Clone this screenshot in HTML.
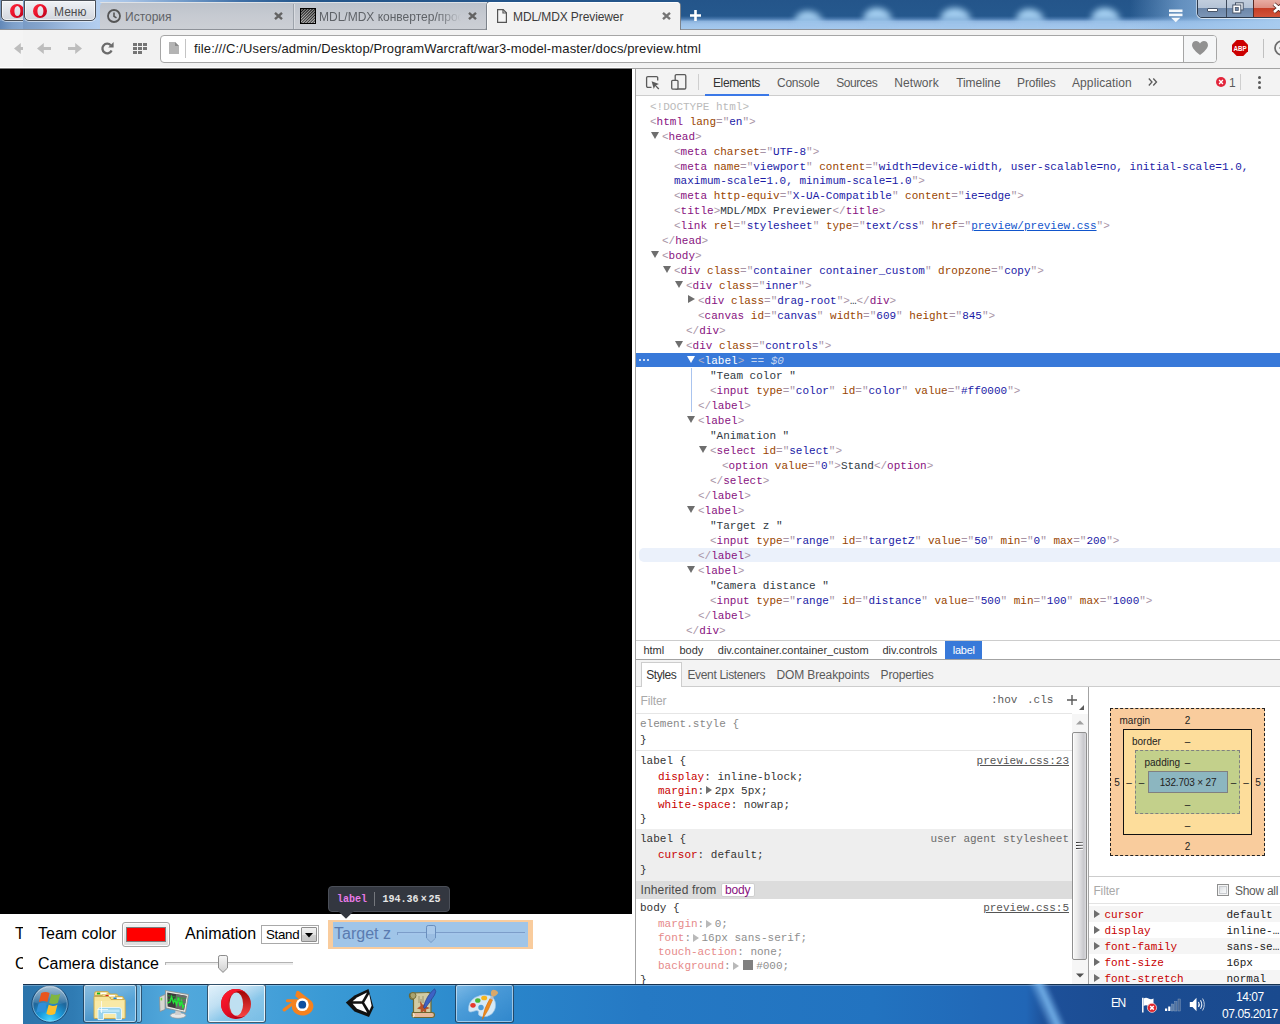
<!DOCTYPE html>
<html lang="ru">
<head>
<meta charset="UTF-8">
<title>MDL/MDX Previewer</title>
<style>
*{box-sizing:border-box;margin:0;padding:0}
html,body{width:1280px;height:1024px;overflow:hidden;background:#fff}
body{position:relative;font-family:"Liberation Sans",sans-serif;font-size:12px;color:#333}
.abs{position:absolute}
.ui{font-family:"Liberation Sans",sans-serif;font-size:12px;white-space:nowrap;position:absolute;line-height:14px}
.mono{font-family:"Liberation Mono",monospace;font-size:11px;white-space:pre;line-height:15px}
svg{position:absolute;overflow:visible}

/* ---------- title bar / sky ---------- */
#sky{left:0;top:0;width:1280px;height:30px;background:linear-gradient(180deg,#24558a 0,#25588d 16px,#4a7aaf 19px,#8db4de 21.500px,#9dc2e9 24px,#a5c9ee 29px);overflow:hidden}
#sky .bump{position:absolute;background:linear-gradient(180deg,#aad6f6 0,#a6d1f3 45%,rgba(160,198,236,.5) 80%,rgba(160,198,236,0) 100%);border-radius:14px 16px 0 0/12px 13px 0 0;filter:blur(3px)}
#skyL{left:0;top:0;width:320px;height:30px;background:linear-gradient(90deg,#6c8fbc 0,#84a4cc 40px,#a4c0e3 72px,#b3ceef 98px,#a5c1e4 130px,#7099c8 185px,#3f6fa6 240px,#27598e 295px,rgba(38,88,141,0) 320px)}
#skyR{left:1130px;top:0;width:150px;height:30px;background:linear-gradient(90deg,rgba(150,190,232,0) 0,rgba(150,190,232,.55) 50px,rgba(168,204,240,.95) 150px)}
#tbline{left:0;top:29px;width:1280px;height:1px;background:#8e9299}
#toolbar{left:0;top:30px;width:1280px;height:38px;background:#f2f2f2}

/* tabs */
.tab{position:absolute;top:2px;height:27px;background:linear-gradient(180deg,#bcc2cb 0,#c6cad1 50%,#cccfd5 100%);border-radius:5px 5px 0 0}
#tab3{background:#f2f2f2;height:28px}

/* ---------- page ---------- */
#canvas{left:0;top:69px;width:632px;height:845px;background:#000}
.pg{position:absolute;font:16px "Liberation Sans",sans-serif;color:#000;white-space:nowrap;line-height:18px}

/* ---------- devtools ---------- */
#dt{left:636px;top:69px;width:644px;height:915px;background:#fff;overflow:hidden}
.row{position:absolute;left:0;height:15px;width:644px}
.row span.t{position:absolute;top:0}
.tg{color:#881280}.br{color:#a894a6}.an{color:#994500}.av{color:#1a1aa6}.tx{color:#303942}
.ar{position:absolute;width:0;height:0}
.ard{border-left:4px solid transparent;border-right:4px solid transparent;border-top:7px solid #6e6e6e}
.arr{border-top:4px solid transparent;border-bottom:4px solid transparent;border-left:7px solid #6e6e6e}
.pn{color:#c80000}
.dim .pn{color:#e68a8a}.dim{color:#8e8e8e}
</style>
</head>
<body>

<!-- ================= TITLE BAR ================= -->
<div id="sky" class="abs">
  <div id="skyL" class="abs"></div>
  <div class="bump" style="left:794px;top:11px;width:29px;height:15px"></div>
  <div class="bump" style="left:863px;top:8px;width:29px;height:18px"></div>
  <div class="bump" style="left:940px;top:8px;width:31px;height:18px"></div>
  <div class="bump" style="left:1016px;top:9px;width:28px;height:17px"></div>
  <div class="bump" style="left:1091px;top:8px;width:29px;height:18px"></div>
  <div id="skyR" class="abs"></div>
</div>
<div id="tbline" class="abs"></div>
<div id="toolbar" class="abs"></div>

<!-- menu button -->
<div class="abs" id="menubtn" style="left:24px;top:0;width:72px;height:21px;border-top-color:#8aa6c8;border:1px solid #4a4f57;border-radius:0 0 5px 5px;background:linear-gradient(180deg,#eef1f5 0,#dfe3e9 55%,#d2d7de 100%);box-shadow:0 1px 0 rgba(255,255,255,.55),inset 0 0 0 1px rgba(255,255,255,.6)"></div>
<svg style="left:33px;top:4px" width="14" height="14" viewBox="0 0 14 14"><defs><linearGradient id="og" x1="0" y1="0" x2="1" y2="1"><stop offset="0" stop-color="#ff2a3c"/><stop offset=".5" stop-color="#e8102a"/><stop offset="1" stop-color="#b00018"/></linearGradient></defs><path fill-rule="evenodd" fill="url(#og)" d="M7 0a7 7 0 1 0 0 14A7 7 0 0 0 7 0zM7.400 1.900c1.800 0 3 2.200 3 5.100s-1.200 5.100-3 5.100-3-2.200-3-5.100 1.200-5.100 3-5.100z"/></svg>
<div class="ui" id="menutxt" style="left:54px;top:5px;color:#4d4d4d">Меню</div>

<!-- tabs -->
<div class="tab" id="tab1" style="left:100px;width:194px;border-radius:5px 0 0 0"></div>
<div class="abs" style="left:483px;top:25px;width:5px;height:4px;background:#f2f2f2"></div>
<div class="tab" id="tab2" style="left:294px;width:193px;border-radius:0 0 4px 0;box-shadow:1px 0 0 #7d838b"></div>
<div class="abs" style="left:293px;top:4px;width:1px;height:25px;background:#9da3ab"></div>
<div class="abs" style="left:294px;top:4px;width:1px;height:25px;background:#d9dce1"></div>
<div class="abs" style="left:100px;top:2px;width:387px;height:1px;background:#dfe2e6;border-radius:5px 0 0 0"></div>
<div class="tab" id="tab3" style="left:487px;width:193px;border-radius:4px 4px 0 0;box-shadow:-1px 0 0 #7d838b,1px 0 0 #7d838b,inset 0 1px 0 #fff,inset 1px 0 0 #fafafa"></div>
<div class="abs" style="left:487px;top:29px;width:193px;height:1px;background:#f2f2f2"></div>

<!-- tab1: clock + История -->
<svg style="left:107px;top:9px" width="14" height="14" viewBox="0 0 14 14"><circle cx="7" cy="7" r="6" fill="none" stroke="#555" stroke-width="1.800"/><path d="M7 3.500V7.300L9.500 8.900" fill="none" stroke="#555" stroke-width="1.600"/></svg>
<div class="ui" id="t1txt" style="left:125px;top:10px;color:#5f6368">История</div>
<svg class="cx" style="left:274px;top:12px" width="9" height="8" viewBox="0 0 9 8"><path d="M1 .8L8 7.200M8 .8L1 7.200" stroke="#636363" stroke-width="2.400"/></svg>

<!-- tab2: hatch + text -->
<svg style="left:300px;top:8px" width="16" height="16" viewBox="0 0 16 16"><defs><pattern id="hat" width="2" height="2" patternUnits="userSpaceOnUse" patternTransform="rotate(-45)"><rect width="2" height="2" fill="#0a0a0a"/><rect width="2" height="1.050" fill="#b4b4b4"/></pattern><linearGradient id="hatg" x1="0" y1="0" x2="0" y2="1"><stop offset="0" stop-color="#000" stop-opacity=".22"/><stop offset="1" stop-color="#fff" stop-opacity=".18"/></linearGradient></defs><rect x="0" y="0" width="16" height="16" fill="#000"/><rect x="1" y="1" width="14" height="14" fill="url(#hat)"/><rect x="1" y="1" width="14" height="14" fill="url(#hatg)"/></svg>
<div class="ui" id="t2txt" style="left:319px;top:10px;color:#5f6368;width:143px;overflow:hidden;-webkit-mask-image:linear-gradient(90deg,#000 118px,transparent 142px)">MDL/MDX конвертер/просмотр</div>
<svg class="cx" style="left:468px;top:12px" width="9" height="8" viewBox="0 0 9 8"><path d="M1 .8L8 7.200M8 .8L1 7.200" stroke="#636363" stroke-width="2.400"/></svg>

<!-- tab3: page icon + MDL/MDX Previewer -->
<svg style="left:497px;top:9px" width="10" height="14" viewBox="0 0 10 14"><path d="M.6.600H6.200L9.400 3.800V13.400H.6z" fill="#f4f4f4" stroke="#555" stroke-width="1.200"/><path d="M6 .600V4H9.400" fill="none" stroke="#555" stroke-width="1.200"/></svg>
<div class="ui" id="t3txt" style="left:513px;top:10px;letter-spacing:-.1px;color:#3b3b3b">MDL/MDX Previewer</div>
<svg class="cx" style="left:662px;top:12px" width="9" height="8" viewBox="0 0 9 8"><path d="M1 .8L8 7.200M8 .8L1 7.200" stroke="#757575" stroke-width="2.400"/></svg>

<!-- new tab plus -->
<svg style="left:690px;top:10px" width="11" height="11" viewBox="0 0 11 11"><path d="M5.500 0V11M0 5.500H11" stroke="#fff" stroke-width="2.600"/></svg>

<!-- tab list icon -->
<svg style="left:1169px;top:9px" width="14" height="14" viewBox="0 0 14 14"><rect x="0" y=".5" width="13.500" height="2.600" fill="#f4f8fc"/><rect x="0" y="4.600" width="13.500" height="2.600" fill="#f4f8fc"/><path d="M2.200 8.800H11.300L6.750 13.300z" fill="#f4f8fc"/></svg>

<!-- window buttons -->
<div class="abs" id="winbtns" style="left:1197px;top:-2px;width:90px;height:20px;border:1px solid #2d3a4c;border-radius:0 0 0 5px;box-shadow:0 1px 0 rgba(255,255,255,.7),-1px 0 0 rgba(255,255,255,.5);overflow:hidden">
  <div class="abs" style="left:0;top:0;width:28px;height:19px;background:linear-gradient(180deg,#c3cfde 0,#b4c3d6 9px,#6c86a8 9px,#7d97b8 19px)"></div>
  <div class="abs" style="left:28px;top:0;width:1px;height:19px;background:#3d4a5c"></div>
  <div class="abs" style="left:29px;top:0;width:26px;height:19px;background:linear-gradient(180deg,#c3cfde 0,#b4c3d6 9px,#6c86a8 9px,#7d97b8 19px)"></div>
  <div class="abs" style="left:55px;top:0;width:1px;height:19px;background:#5a2a24"></div>
  <div class="abs" style="left:56px;top:0;width:34px;height:19px;background:linear-gradient(180deg,#e9b0a6 0,#dd8f82 9px,#c53d25 9px,#d4563c 19px)"></div>
</div>
<div class="abs" style="left:1207px;top:8px;width:11px;height:4px;background:#fff;border:1px solid #485569;border-radius:1px"></div>
<svg style="left:1232px;top:2px" width="12" height="12" viewBox="0 0 12 12"><rect x="3.500" y=".8" width="7.700" height="7.200" fill="#eef2f7" stroke="#485569" stroke-width="1"/><rect x=".8" y="3" width="8" height="8" fill="#fff" stroke="#485569" stroke-width="1"/><rect x="3.300" y="5.500" width="3" height="3" fill="#6f88a8" stroke="#485569" stroke-width=".8"/></svg>
<svg style="left:1273px;top:3px" width="12" height="10" viewBox="0 0 12 10"><path d="M1 1L10 9M10 1L1 9" stroke="#5a2a24" stroke-width="4.200"/><path d="M1 1L10 9M10 1L1 9" stroke="#fff" stroke-width="2.600"/></svg>

<!-- toolbar icons -->
<svg id="bk" style="left:37px;top:43px" width="14" height="11" viewBox="0 0 14 11"><path d="M6.800 0L0 5.500 6.800 11V7H14V4H6.800z" fill="#bdbdbd"/></svg>
<svg id="fw" style="left:68px;top:43px" width="14" height="11" viewBox="0 0 14 11"><path d="M7.200 0L14 5.500 7.200 11V7H0V4H7.200z" fill="#bdbdbd"/></svg>
<svg id="rl" style="left:101px;top:42px" width="13" height="13" viewBox="0 0 13 13"><path d="M10.600 8.500A4.800 4.800 0 1 1 9.800 3.300" fill="none" stroke="#6b6b6b" stroke-width="2.300"/><path d="M7.200 5.400H12.600V0z" fill="#6b6b6b"/></svg>
<svg id="gr" style="left:133px;top:43px" width="14" height="11" viewBox="0 0 14 11" fill="#757575"><rect x="0" y="0" width="4" height="3"/><rect x="5" y="0" width="4" height="3"/><rect x="10" y="0" width="4" height="3"/><rect x="0" y="4" width="4" height="3"/><rect x="5" y="4" width="4" height="3"/><rect x="10" y="4" width="4" height="3"/><rect x="0" y="8" width="4" height="3"/><rect x="5" y="8" width="4" height="3"/></svg>

<!-- address field -->
<div class="abs" id="addr" style="left:160px;top:35px;width:1057px;height:28px;border:1px solid #a6a6a6;border-radius:4px;background:#fff"></div>
<div class="abs" style="left:1183px;top:36px;width:33px;height:26px;background:#f5f6f7;border-left:1px solid #a6a6a6;border-radius:0 3px 3px 0"></div>
<svg style="left:169px;top:42px" width="10" height="12" viewBox="0 0 10 12"><path d="M0 0H6L10 4V12H0z" fill="#b4b4b4"/><path d="M6 0V4H10z" fill="#8a8a8a"/></svg>
<div class="abs" style="left:185px;top:39px;width:1px;height:19px;background:#c4c4c4"></div>
<div class="ui" id="url" style="left:194px;top:41px;font-size:13px;letter-spacing:.128px;color:#1a1a1a;line-height:16px">file:///C:/Users/admin/Desktop/ProgramWarcraft/war3-model-master/docs/preview.html</div>
<svg style="left:1192px;top:41px" width="16" height="14" viewBox="0 0 16 14"><path d="M8 14C8 14 0 8.200 0 4.200 0 1.600 1.900 0 4.100 0 5.800 0 7.200 1 8 2.400 8.800 1 10.200 0 11.900 0 14.100 0 16 1.600 16 4.200 16 8.200 8 14 8 14z" fill="#919191"/></svg>
<!-- ABP -->
<svg style="left:1232px;top:40px" width="16" height="16" viewBox="0 0 16 16"><path d="M4.700 0H11.300L16 4.700V11.300L11.300 16H4.700L0 11.300V4.700z" fill="#cc0000"/><text x="8" y="11.200" text-anchor="middle" font-family="Liberation Sans, sans-serif" font-weight="bold" font-size="7.500" fill="#fff" textLength="13" lengthAdjust="spacingAndGlyphs">ABP</text></svg>
<div class="abs" style="left:1263px;top:39px;width:1px;height:19px;background:#c0c0c0"></div>
<svg style="left:1274px;top:40px" width="16" height="16" viewBox="0 0 16 16"><circle cx="8" cy="8" r="7" fill="none" stroke="#6b6b6b" stroke-width="1.700"/><path d="M5 8H9" stroke="#6b6b6b" stroke-width="1.200"/></svg>




<!-- ================= PAGE ================= -->
<div id="canvas" class="abs"></div>
<div class="abs" style="left:0;top:67px;width:632px;height:1px;background:#fff"></div>
<div class="abs" style="left:0;top:68px;width:632px;height:1px;background:#7a7a7a"></div>
<!-- controls line 1 -->
<div class="pg" id="tc" style="left:38px;top:925px">Team color</div>
<div class="abs" id="colorinp" style="left:122px;top:922px;width:48px;height:25px;border:1px solid #a3a3a3;border-radius:3px;background:linear-gradient(180deg,#f4f4f4,#dcdcdc);box-shadow:inset 0 0 0 1px #fdfdfd"></div>
<div class="abs" style="left:126px;top:927px;width:40px;height:15px;background:#ff0000;border:1px solid #7d7d7d"></div>
<div class="pg" id="an" style="left:185px;top:925px">Animation</div>
<div class="abs" id="sel" style="left:261px;top:925px;width:58px;height:19px;border:1px solid #a9a9a9;background:#fff"></div>
<div class="pg" id="stand" style="left:266px;top:926px;font-size:13.333px;letter-spacing:-.3px;line-height:17px">Stand</div>
<div class="abs" style="left:301px;top:927px;width:16px;height:15px;border:1px solid #8e8e8e;border-radius:1px;background:linear-gradient(180deg,#f2f2f2 0,#e4e4e4 50%,#cfcfcf 51%,#c6c6c6 100%)"></div>
<svg style="left:305px;top:933px" width="8" height="5" viewBox="0 0 8 5"><path d="M0 0H8L4 4.500z" fill="#000"/></svg>
<!-- highlighted label (Target z) -->
<div class="abs" style="left:328px;top:920px;width:205px;height:29px;background:#f9cc9d"></div>
<div class="abs" style="left:333px;top:922px;width:195px;height:25px;background:#a0c5e8"></div>
<div class="pg" id="tz" style="left:334px;top:925px;color:#5a7bb0">Target z</div>
<div class="abs" style="left:397px;top:932px;width:128px;height:3px;background:#a3c6ea;border-top:1px solid #7c9dc9;border-left:1px solid #7c9dc9"></div>
<svg style="left:426px;top:925px" width="10" height="18" viewBox="0 0 10 18"><path d="M2.200 .5H7.800Q9.500 .5 9.500 2.200V13L5 17.400.5 13V2.200Q.5 .5 2.200 .5z" fill="#a9c9ea" stroke="#6a8fbe"/><path d="M1 9H9V13L5 16.800 1 13z" fill="#9abde2"/></svg>
<!-- controls line 2 -->
<div class="pg" id="cd" style="left:38px;top:955px">Camera distance</div>
<div class="abs" style="left:165px;top:962px;width:128px;height:3px;background:#ededed;border-top:1px solid #b3b3b3;border-left:1px solid #b3b3b3"></div>
<svg style="left:218px;top:955px" width="10" height="18" viewBox="0 0 10 18"><defs><linearGradient id="thg" x1="0" y1="0" x2="0" y2="1"><stop offset="0" stop-color="#f6f6f6"/><stop offset=".55" stop-color="#e2e2e2"/><stop offset="1" stop-color="#cfcfcf"/></linearGradient></defs><path d="M2.200 .5H7.800Q9.500 .5 9.500 2.200V13L5 17.400.5 13V2.200Q.5 .5 2.200 .5z" fill="url(#thg)" stroke="#8c8c8c"/></svg>
<!-- tooltip -->
<div class="abs" id="tip" style="left:328px;top:886px;width:122px;height:26px;background:#333740;border:1px solid #4b4f58;border-radius:4px"></div>
<svg style="left:338px;top:911px" width="16" height="8" viewBox="0 0 16 8"><path d="M0 0H16L8 7.800z" fill="#333740"/></svg>
<div class="abs mono" id="tiplabel" style="left:337px;top:894px;font-weight:bold;font-size:10px;line-height:12px;color:#e87ae8">label</div>
<div class="abs" style="left:374px;top:892px;width:1px;height:14px;background:#74777d"></div>
<div class="abs mono" id="tipdim" style="left:382.500px;top:894px;font-weight:bold;font-size:10px;line-height:12px;color:#e6e6e6">194.36<span style="margin:0 1.800px 0 2.200px">×</span>25</div>

<!-- ================= DEVTOOLS ================= -->
<div class="abs" style="left:635px;top:69px;width:1px;height:915px;background:#a3a3a3"></div>
<div class="abs" style="left:632px;top:68px;width:648px;height:1px;background:#a3a3a3"></div>
<div id="dt" class="abs">
<div class="abs" style="left:0;top:0;width:644px;height:26px;background:#f3f3f3"></div>
<div class="abs" style="left:0;top:26px;width:644px;height:1px;background:#cdcdcd"></div>
<svg style="left:10px;top:7px" width="14" height="13" viewBox="0 0 14 13"><path d="M5.500 11.300H1.800A1.200 1.200 0 0 1 .6 10.100V1.800A1.200 1.200 0 0 1 1.800.600H10.500A1.200 1.200 0 0 1 11.700 1.800V4.600" fill="none" stroke="#5a5a5a" stroke-width="1.300"/><path d="M5.600 5.300L13 8 10 9.200 13.300 12.500 12.300 13.400 9.100 10.100 7.800 12.900z" fill="#5a5a5a"/></svg>
<svg style="left:35px;top:5px" width="16" height="16" viewBox="0 0 16 16"><rect x="4.200" y=".7" width="10.600" height="14.300" rx="1.200" fill="none" stroke="#5a5a5a" stroke-width="1.300"/><rect x=".7" y="6.300" width="6.300" height="8.800" rx="1" fill="#f3f3f3" stroke="#5a5a5a" stroke-width="1.300"/></svg>
<div class="abs" style="left:62px;top:5px;width:1px;height:16px;background:#cfcfcf"></div>
<div class="ui dtt" id="dtt0" style="letter-spacing:-0.379px;left:77.0px;top:7px;color:#333">Elements</div>
<div class="ui dtt" id="dtt1" style="letter-spacing:-0.233px;left:141.0px;top:7px;color:#5a5a5a">Console</div>
<div class="ui dtt" id="dtt2" style="letter-spacing:-0.447px;left:200.3px;top:7px;color:#5a5a5a">Sources</div>
<div class="ui dtt" id="dtt3" style="letter-spacing:0.055px;left:258.3px;top:7px;color:#5a5a5a">Network</div>
<div class="ui dtt" id="dtt4" style="letter-spacing:-0.063px;left:320.2px;top:7px;color:#5a5a5a">Timeline</div>
<div class="ui dtt" id="dtt5" style="letter-spacing:-0.189px;left:381.1px;top:7px;color:#5a5a5a">Profiles</div>
<div class="ui dtt" id="dtt6" style="letter-spacing:0.098px;left:436.0px;top:7px;color:#5a5a5a">Application</div>
<div class="abs" style="left:69px;top:25px;width:64px;height:2px;background:#3b78e7"></div>
<svg style="left:512px;top:9px" width="10" height="8" viewBox="0 0 10 8"><path d="M.8.500L4 4 .8 7.500M5.300.500L8.500 4 5.300 7.500" fill="none" stroke="#5a5a5a" stroke-width="1.300"/></svg>
<svg style="left:580px;top:8px" width="10" height="10" viewBox="0 0 10 10"><circle cx="5" cy="5" r="5" fill="#e2263b"/><path d="M3.100 3.100L6.900 6.900M6.900 3.100L3.100 6.900" stroke="#fff" stroke-width="1.400"/></svg>
<div class="ui" style="left:593px;top:7px;color:#5a5a5a">1</div>
<div class="abs" style="left:604px;top:5px;width:1px;height:16px;background:#cfcfcf"></div>
<div class="abs" style="left:622px;top:7px;width:3px;height:3px;border-radius:50%;background:#5a5a5a"></div>
<div class="abs" style="left:622px;top:12px;width:3px;height:3px;border-radius:50%;background:#5a5a5a"></div>
<div class="abs" style="left:622px;top:17px;width:3px;height:3px;border-radius:50%;background:#5a5a5a"></div>
<div class="row mono" id="r0" style="top:31px"><span class="t" style="left:14px"><span style="color:#bababa">&lt;!DOCTYPE html&gt;</span></span></div>
<div class="row mono" id="r1" style="top:46px"><span class="t" style="left:14px"><span class="br">&lt;</span><span class="tg">html</span> <span class="an">lang</span><span class="br">="</span><span class="av">en</span><span class="br">"</span><span class="br">&gt;</span></span></div>
<div class="ar ard" style="left:15px;top:63px"></div>
<div class="row mono" id="r2" style="top:61px"><span class="t" style="left:26px"><span class="br">&lt;</span><span class="tg">head</span><span class="br">&gt;</span></span></div>
<div class="row mono" id="r3" style="top:76px"><span class="t" style="left:38px"><span class="br">&lt;</span><span class="tg">meta</span> <span class="an">charset</span><span class="br">="</span><span class="av">UTF-8</span><span class="br">"</span><span class="br">&gt;</span></span></div>
<div class="row mono" id="r4" style="top:91px"><span class="t" style="left:38px"><span class="br">&lt;</span><span class="tg">meta</span> <span class="an">name</span><span class="br">="</span><span class="av">viewport</span><span class="br">"</span> <span class="an">content</span><span class="br">="</span><span class="av">width=device-width, user-scalable=no, initial-scale=1.0,</span></span></div>
<div class="row mono" id="r5" style="top:105px"><span class="t" style="left:38px"><span class="av">maximum-scale=1.0, minimum-scale=1.0</span><span class="br">"&gt;</span></span></div>
<div class="row mono" id="r6" style="top:120px"><span class="t" style="left:38px"><span class="br">&lt;</span><span class="tg">meta</span> <span class="an">http-equiv</span><span class="br">="</span><span class="av">X-UA-Compatible</span><span class="br">"</span> <span class="an">content</span><span class="br">="</span><span class="av">ie=edge</span><span class="br">"</span><span class="br">&gt;</span></span></div>
<div class="row mono" id="r7" style="top:135px"><span class="t" style="left:38px"><span class="br">&lt;</span><span class="tg">title</span><span class="br">&gt;</span><span class="tx">MDL/MDX Previewer</span><span class="br">&lt;/</span><span class="tg">title</span><span class="br">&gt;</span></span></div>
<div class="row mono" id="r8" style="top:150px"><span class="t" style="left:38px"><span class="br">&lt;</span><span class="tg">link</span> <span class="an">rel</span><span class="br">="</span><span class="av">stylesheet</span><span class="br">"</span> <span class="an">type</span><span class="br">="</span><span class="av">text/css</span><span class="br">"</span> <span class="an">href</span><span class="br">="</span><span style="color:#1155cc;text-decoration:underline">preview/preview.css</span><span class="br">"</span><span class="br">&gt;</span></span></div>
<div class="row mono" id="r9" style="top:165px"><span class="t" style="left:26px"><span class="br">&lt;/</span><span class="tg">head</span><span class="br">&gt;</span></span></div>
<div class="ar ard" style="left:15px;top:182px"></div>
<div class="row mono" id="r10" style="top:180px"><span class="t" style="left:26px"><span class="br">&lt;</span><span class="tg">body</span><span class="br">&gt;</span></span></div>
<div class="ar ard" style="left:27px;top:197px"></div>
<div class="row mono" id="r11" style="top:195px"><span class="t" style="left:38px"><span class="br">&lt;</span><span class="tg">div</span> <span class="an">class</span><span class="br">="</span><span class="av">container container_custom</span><span class="br">"</span> <span class="an">dropzone</span><span class="br">="</span><span class="av">copy</span><span class="br">"</span><span class="br">&gt;</span></span></div>
<div class="ar ard" style="left:39px;top:212px"></div>
<div class="row mono" id="r12" style="top:210px"><span class="t" style="left:50px"><span class="br">&lt;</span><span class="tg">div</span> <span class="an">class</span><span class="br">="</span><span class="av">inner</span><span class="br">"</span><span class="br">&gt;</span></span></div>
<div class="ar arr" style="left:52px;top:226px"></div>
<div class="row mono" id="r13" style="top:225px"><span class="t" style="left:62px"><span class="br">&lt;</span><span class="tg">div</span> <span class="an">class</span><span class="br">="</span><span class="av">drag-root</span><span class="br">"</span><span class="br">&gt;</span><span class="tx">…</span><span class="br">&lt;/</span><span class="tg">div</span><span class="br">&gt;</span></span></div>
<div class="row mono" id="r14" style="top:240px"><span class="t" style="left:62px"><span class="br">&lt;</span><span class="tg">canvas</span> <span class="an">id</span><span class="br">="</span><span class="av">canvas</span><span class="br">"</span> <span class="an">width</span><span class="br">="</span><span class="av">609</span><span class="br">"</span> <span class="an">height</span><span class="br">="</span><span class="av">845</span><span class="br">"</span><span class="br">&gt;</span></span></div>
<div class="row mono" id="r15" style="top:255px"><span class="t" style="left:50px"><span class="br">&lt;/</span><span class="tg">div</span><span class="br">&gt;</span></span></div>
<div class="ar ard" style="left:39px;top:272px"></div>
<div class="row mono" id="r16" style="top:270px"><span class="t" style="left:50px"><span class="br">&lt;</span><span class="tg">div</span> <span class="an">class</span><span class="br">="</span><span class="av">controls</span><span class="br">"</span><span class="br">&gt;</span></span></div>
<div class="abs" style="left:0;top:284px;width:644px;height:14px;background:#3879d9"></div>
<div class="abs" style="left:3px;top:290px;width:2px;height:2px;background:#fff;border-radius:1px"></div>
<div class="abs" style="left:7px;top:290px;width:2px;height:2px;background:#fff;border-radius:1px"></div>
<div class="abs" style="left:11px;top:290px;width:2px;height:2px;background:#fff;border-radius:1px"></div>
<div class="ar ard" style="left:51px;top:287px;border-top-color:#fff"></div>
<div class="row mono" id="r17" style="top:285px"><span class="t" style="left:62px;color:#fff"><span style="color:#b3b0c4">&lt;</span>label<span style="color:#b3b0c4">&gt;</span><span style="color:#c4d5f0"> == <i>$0</i></span></span></div>
<div class="row mono" id="r18" style="top:300px"><span class="t" style="left:74px"><span class="tx">"Team color "</span></span></div>
<div class="row mono" id="r19" style="top:315px"><span class="t" style="left:74px"><span class="br">&lt;</span><span class="tg">input</span> <span class="an">type</span><span class="br">="</span><span class="av">color</span><span class="br">"</span> <span class="an">id</span><span class="br">="</span><span class="av">color</span><span class="br">"</span> <span class="an">value</span><span class="br">="</span><span class="av">#ff0000</span><span class="br">"</span><span class="br">&gt;</span></span></div>
<div class="row mono" id="r20" style="top:330px"><span class="t" style="left:62px"><span class="br">&lt;/</span><span class="tg">label</span><span class="br">&gt;</span></span></div>
<div class="ar ard" style="left:51px;top:347px"></div>
<div class="row mono" id="r21" style="top:345px"><span class="t" style="left:62px"><span class="br">&lt;</span><span class="tg">label</span><span class="br">&gt;</span></span></div>
<div class="row mono" id="r22" style="top:360px"><span class="t" style="left:74px"><span class="tx">"Animation "</span></span></div>
<div class="ar ard" style="left:63px;top:377px"></div>
<div class="row mono" id="r23" style="top:375px"><span class="t" style="left:74px"><span class="br">&lt;</span><span class="tg">select</span> <span class="an">id</span><span class="br">="</span><span class="av">select</span><span class="br">"</span><span class="br">&gt;</span></span></div>
<div class="row mono" id="r24" style="top:390px"><span class="t" style="left:86px"><span class="br">&lt;</span><span class="tg">option</span> <span class="an">value</span><span class="br">="</span><span class="av">0</span><span class="br">"</span><span class="br">&gt;</span><span class="tx">Stand</span><span class="br">&lt;/</span><span class="tg">option</span><span class="br">&gt;</span></span></div>
<div class="row mono" id="r25" style="top:405px"><span class="t" style="left:74px"><span class="br">&lt;/</span><span class="tg">select</span><span class="br">&gt;</span></span></div>
<div class="row mono" id="r26" style="top:420px"><span class="t" style="left:62px"><span class="br">&lt;/</span><span class="tg">label</span><span class="br">&gt;</span></span></div>
<div class="ar ard" style="left:51px;top:437px"></div>
<div class="row mono" id="r27" style="top:435px"><span class="t" style="left:62px"><span class="br">&lt;</span><span class="tg">label</span><span class="br">&gt;</span></span></div>
<div class="row mono" id="r28" style="top:450px"><span class="t" style="left:74px"><span class="tx">"Target z "</span></span></div>
<div class="row mono" id="r29" style="top:465px"><span class="t" style="left:74px"><span class="br">&lt;</span><span class="tg">input</span> <span class="an">type</span><span class="br">="</span><span class="av">range</span><span class="br">"</span> <span class="an">id</span><span class="br">="</span><span class="av">targetZ</span><span class="br">"</span> <span class="an">value</span><span class="br">="</span><span class="av">50</span><span class="br">"</span> <span class="an">min</span><span class="br">="</span><span class="av">0</span><span class="br">"</span> <span class="an">max</span><span class="br">="</span><span class="av">200</span><span class="br">"</span><span class="br">&gt;</span></span></div>
<div class="abs" style="left:3px;top:479px;width:641px;height:14px;background:#ebf1fb;border-radius:5px 0 0 5px"></div>
<div class="row mono" id="r30" style="top:480px"><span class="t" style="left:62px"><span class="br">&lt;/</span><span class="tg">label</span><span class="br">&gt;</span></span></div>
<div class="ar ard" style="left:51px;top:497px"></div>
<div class="row mono" id="r31" style="top:495px"><span class="t" style="left:62px"><span class="br">&lt;</span><span class="tg">label</span><span class="br">&gt;</span></span></div>
<div class="row mono" id="r32" style="top:510px"><span class="t" style="left:74px"><span class="tx">"Camera distance "</span></span></div>
<div class="row mono" id="r33" style="top:525px"><span class="t" style="left:74px"><span class="br">&lt;</span><span class="tg">input</span> <span class="an">type</span><span class="br">="</span><span class="av">range</span><span class="br">"</span> <span class="an">id</span><span class="br">="</span><span class="av">distance</span><span class="br">"</span> <span class="an">value</span><span class="br">="</span><span class="av">500</span><span class="br">"</span> <span class="an">min</span><span class="br">="</span><span class="av">100</span><span class="br">"</span> <span class="an">max</span><span class="br">="</span><span class="av">1000</span><span class="br">"</span><span class="br">&gt;</span></span></div>
<div class="row mono" id="r34" style="top:540px"><span class="t" style="left:62px"><span class="br">&lt;/</span><span class="tg">label</span><span class="br">&gt;</span></span></div>
<div class="row mono" id="r35" style="top:555px"><span class="t" style="left:50px"><span class="br">&lt;/</span><span class="tg">div</span><span class="br">&gt;</span></span></div>
<div class="abs" style="left:55px;top:299px;width:1px;height:44px;background:#aac4ef"></div>
<div class="abs" style="left:0;top:571px;width:644px;height:1px;background:#cdcdcd"></div>
<div class="abs" style="left:0;top:590px;width:644px;height:1px;background:#a3a3a3"></div>
<div class="abs" style="left:309px;top:572px;width:37px;height:18px;background:#3879d9"></div>
<div class="ui bc" id="bc0" style="font-size:11px;left:7.4px;top:574px;color:#333">html</div>
<div class="ui bc" id="bc1" style="font-size:11px;left:43.4px;top:574px;color:#333">body</div>
<div class="ui bc" id="bc2" style="font-size:11px;left:81.8px;top:574px;color:#333">div.container.container_custom</div>
<div class="ui bc" id="bc3" style="font-size:11px;left:246.5px;top:574px;color:#333">div.controls</div>
<div class="ui bc" id="bc4" style="letter-spacing:-0.270px;font-size:11px;left:316.8px;top:574px;color:#fff">label</div>
<div class="abs" style="left:0;top:591px;width:644px;height:26px;background:#f3f3f3"></div>
<div class="abs" style="left:0;top:617px;width:644px;height:1px;background:#cdcdcd"></div>
<div class="abs" style="left:5px;top:593px;width:41px;height:25px;background:#fff;border:1px solid #cdcdcd;border-bottom:none"></div>
<div class="ui stt" id="stt0" style="letter-spacing:-0.448px;left:10.2px;top:599px;color:#333">Styles</div>
<div class="ui stt" id="stt1" style="letter-spacing:-0.328px;left:51.4px;top:599px;color:#5a5a5a">Event Listeners</div>
<div class="ui stt" id="stt2" style="letter-spacing:-0.127px;left:140.5px;top:599px;color:#5a5a5a">DOM Breakpoints</div>
<div class="ui stt" id="stt3" style="letter-spacing:-0.160px;left:244.6px;top:599px;color:#5a5a5a">Properties</div>
<div class="abs" style="left:452px;top:618px;width:1px;height:300px;background:#a3a3a3"></div>
<div class="ui" id="flt" style="letter-spacing:-0.162px;left:4.6px;top:625px;color:#a9a9a9">Filter</div>
<div class="abs mono" style="left:355px;top:624px;color:#5a5a5a">:hov</div>
<div class="abs mono" style="left:391px;top:624px;color:#5a5a5a">.cls</div>
<svg style="left:431px;top:626px" width="10" height="10" viewBox="0 0 10 10"><path d="M5 0V10M0 5H10" stroke="#5a5a5a" stroke-width="1.400"/></svg>
<svg style="left:443px;top:636px" width="5" height="5" viewBox="0 0 5 5"><path d="M5 0V5H0z" fill="#5a5a5a"/></svg>
<div class="abs" style="left:0;top:644px;width:436px;height:1px;background:#e6e6e6"></div>
<div class="abs" style="left:0;top:681px;width:436px;height:1px;background:#e6e6e6"></div>
<div class="abs" style="left:0;top:760px;width:436px;height:52px;background:#eeeeee"></div>
<div class="abs" style="left:0;top:812px;width:436px;height:18px;background:#dcdcdc"></div>
<div class="abs mono " style="left:4.0px;top:647.5px"><span style="color:#888">element.style {</span></div>
<div class="abs mono " style="left:4.0px;top:663.5px">}</div>
<div class="abs mono " style="left:4.0px;top:684.5px">label {</div>
<div class="abs mono " style="left:22.0px;top:700.5px"><span class="pn">display</span>: inline-block;</div>
<div class="abs mono " style="left:22.0px;top:714.5px"><span class="pn">margin</span>:<span style="display:inline-block;width:0;height:0;border-top:4px solid transparent;border-bottom:4px solid transparent;border-left:6.500px solid #727272;margin:0 2.500px 0 2px;vertical-align:-.5px"></span>2px 5px;</div>
<div class="abs mono " style="left:22.0px;top:728.5px"><span class="pn">white-space</span>: nowrap;</div>
<div class="abs mono " style="left:4.0px;top:742.7px">}</div>
<div class="abs mono " style="left:4.0px;top:763.4px">label {</div>
<div class="abs mono " style="left:22.0px;top:779.4px"><span class="pn">cursor</span>: default;</div>
<div class="abs mono " style="left:4.0px;top:793.6px">}</div>
<div class="abs mono " style="left:4.0px;top:832.4px">body {</div>
<div class="abs mono dim" style="left:22.0px;top:848.4px"><span class="pn">margin</span>:<span style="display:inline-block;width:0;height:0;border-top:4px solid transparent;border-bottom:4px solid transparent;border-left:6.500px solid #b9b9b9;margin:0 2.500px 0 2px;vertical-align:-.5px"></span>0;</div>
<div class="abs mono dim" style="left:22.0px;top:862.2px"><span class="pn">font</span>:<span style="display:inline-block;width:0;height:0;border-top:4px solid transparent;border-bottom:4px solid transparent;border-left:6.500px solid #b9b9b9;margin:0 2.500px 0 2px;vertical-align:-.5px"></span>16px sans-serif;</div>
<div class="abs mono dim" style="left:22.0px;top:876.2px"><span class="pn">touch-action</span>: none;</div>
<div class="abs mono dim" style="left:22.0px;top:890.2px"><span class="pn">background</span>:<span style="display:inline-block;width:0;height:0;border-top:4px solid transparent;border-bottom:4px solid transparent;border-left:6.500px solid #b9b9b9;margin:0 2.500px 0 2px;vertical-align:-.5px"></span><span style="display:inline-block;width:10px;height:10px;background:#808080;margin:0 3px 0 2px;vertical-align:-1px"></span>#000;</div>
<div class="abs mono " style="left:4.0px;top:904.3px">}</div>
<div class="abs mono" style="right:211px;top:684.5px;color:#555;text-decoration:underline">preview.css:23</div>
<div class="abs mono" style="right:211px;top:763.4px;color:#6b6b6b">user agent stylesheet</div>
<div class="abs mono" style="right:211px;top:832.4px;color:#555;text-decoration:underline">preview.css:5</div>
<div class="ui" id="inh" style="letter-spacing:0.140px;left:4.5px;top:814px;color:#4a4a4a">Inherited from</div>
<div class="abs" style="left:84.5px;top:814px;width:34px;height:14px;background:#fff;border:1px solid #cfcfcf;border-radius:2px"></div>
<div class="ui" id="inhb" style="letter-spacing:-0.208px;left:89px;top:814px;color:#881280">body</div>
<div class="abs" style="left:436px;top:645px;width:16px;height:270px;background:#f6f6f6"></div>
<svg style="left:440px;top:651px" width="8" height="5" viewBox="0 0 8 5"><path d="M0 4.500L4 .500 8 4.500z" fill="#a0a0a0"/></svg>
<div class="abs" style="left:436px;top:663px;width:15px;height:228px;border:1px solid #8f8f8f;border-radius:2px;background:linear-gradient(90deg,#f7f7f7 0,#ececec 30%,#dcdcdf 55%,#c9c9cd 82%,#d9d9dc 100%);box-shadow:inset 1px 0 0 rgba(255,255,255,.8)"></div>
<div class="abs" style="left:440px;top:773px;width:7px;height:1px;background:linear-gradient(90deg,#2e2e2e,#8e8e8e)"></div>
<div class="abs" style="left:440px;top:774px;width:7px;height:1px;background:rgba(255,255,255,.75)"></div>
<div class="abs" style="left:440px;top:776px;width:7px;height:1px;background:linear-gradient(90deg,#2e2e2e,#8e8e8e)"></div>
<div class="abs" style="left:440px;top:777px;width:7px;height:1px;background:rgba(255,255,255,.75)"></div>
<div class="abs" style="left:440px;top:779px;width:7px;height:1px;background:linear-gradient(90deg,#2e2e2e,#8e8e8e)"></div>
<div class="abs" style="left:440px;top:780px;width:7px;height:1px;background:rgba(255,255,255,.75)"></div>
<svg style="left:440px;top:904px" width="8" height="5" viewBox="0 0 8 5"><path d="M0 .500H8L4 4.500z" fill="#505050"/></svg>
<div class="abs" style="left:474px;top:639px;width:155px;height:148px;background:#f9cc9d;border:1px dashed #222"></div>
<div class="abs" style="left:487px;top:660px;width:129px;height:106px;background:#fddd9b;border:1px solid #111"></div>
<div class="abs" style="left:499px;top:681px;width:105px;height:64px;background:#c3d08b;border:1px dashed #808080"></div>
<div class="abs" style="left:512px;top:702px;width:80px;height:22px;background:#8cb6c0;border:1px solid #808080"></div>
<div class="ui bm" style="left:483.5px;top:644.5px;font-size:10px;color:#222">margin</div>
<div class="ui bm" style="left:521.5px;width:60px;text-align:center;top:644.5px;font-size:10px;color:#222">2</div>
<div class="ui bm" style="left:496.0px;top:665.5px;font-size:10px;color:#222">border</div>
<div class="ui bm" style="left:521.5px;width:60px;text-align:center;top:665.5px;font-size:10px;color:#222">–</div>
<div class="ui bm" style="left:508.5px;top:686.5px;font-size:10px;color:#222">padding</div>
<div class="ui bm" style="left:521.5px;width:60px;text-align:center;top:686.5px;font-size:10px;color:#222">–</div>
<div class="ui bm" style="left:522.0px;width:60px;text-align:center;top:707.0px;font-size:10px;color:#222;letter-spacing:-.17px">132.703 × 27</div>
<div class="ui bm" style="left:451.0px;width:60px;text-align:center;top:707.0px;font-size:10px;color:#222">5</div>
<div class="ui bm" style="left:463.0px;width:60px;text-align:center;top:707.0px;font-size:10px;color:#222">–</div>
<div class="ui bm" style="left:475.5px;width:60px;text-align:center;top:707.0px;font-size:10px;color:#222">–</div>
<div class="ui bm" style="left:567.5px;width:60px;text-align:center;top:707.0px;font-size:10px;color:#222">–</div>
<div class="ui bm" style="left:580.0px;width:60px;text-align:center;top:707.0px;font-size:10px;color:#222">–</div>
<div class="ui bm" style="left:592.0px;width:60px;text-align:center;top:707.0px;font-size:10px;color:#222">5</div>
<div class="ui bm" style="left:521.5px;width:60px;text-align:center;top:728.5px;font-size:10px;color:#222">–</div>
<div class="ui bm" style="left:521.5px;width:60px;text-align:center;top:749.5px;font-size:10px;color:#222">–</div>
<div class="ui bm" style="left:521.5px;width:60px;text-align:center;top:770.5px;font-size:10px;color:#222">2</div>
<div class="abs" style="left:453px;top:807px;width:192px;height:1px;background:#cdcdcd"></div>
<div class="ui" id="flt2" style="letter-spacing:-0.129px;left:457.4px;top:815px;color:#a9a9a9">Filter</div>
<div class="abs" style="left:581px;top:815px;width:12px;height:12px;border:1px solid #8e8f8f;background:linear-gradient(135deg,#cfd3d8 0,#eef0f2 55%,#fff 100%);box-shadow:inset 0 0 0 1px #f4f4f4,inset 0 0 0 2px #c9ccd0"></div>
<div class="ui" id="showall" style="letter-spacing:-0.295px;left:599px;top:815px;color:#5a5a5a">Show all</div>
<div class="abs" style="left:453px;top:834px;width:192px;height:1px;background:#e3e3e3"></div>
<div class="abs" style="left:453px;top:837px;width:192px;height:16px;background:#f5f5f5"></div>
<div class="ar arr" style="left:458px;top:841px;border-left-color:#6e6e6e;border-left-width:6.500px;border-top-width:4px;border-bottom-width:4px"></div>
<div class="abs mono" style="left:468.5px;top:838.5px;color:#c80000">cursor</div>
<div class="abs mono" style="left:590.5px;top:838.5px;color:#222">default</div>
<div class="ar arr" style="left:458px;top:857px;border-left-color:#6e6e6e;border-left-width:6.500px;border-top-width:4px;border-bottom-width:4px"></div>
<div class="abs mono" style="left:468.5px;top:854.5px;color:#c80000">display</div>
<div class="abs mono" style="left:590.5px;top:854.5px;color:#222">inline-…</div>
<div class="abs" style="left:453px;top:869px;width:192px;height:16px;background:#f5f5f5"></div>
<div class="ar arr" style="left:458px;top:873px;border-left-color:#6e6e6e;border-left-width:6.500px;border-top-width:4px;border-bottom-width:4px"></div>
<div class="abs mono" style="left:468.5px;top:870.5px;color:#c80000">font-family</div>
<div class="abs mono" style="left:590.5px;top:870.5px;color:#222">sans-se…</div>
<div class="ar arr" style="left:458px;top:889px;border-left-color:#6e6e6e;border-left-width:6.500px;border-top-width:4px;border-bottom-width:4px"></div>
<div class="abs mono" style="left:468.5px;top:886.5px;color:#c80000">font-size</div>
<div class="abs mono" style="left:590.5px;top:886.5px;color:#222">16px</div>
<div class="abs" style="left:453px;top:901px;width:192px;height:16px;background:#f5f5f5"></div>
<div class="ar arr" style="left:458px;top:905px;border-left-color:#6e6e6e;border-left-width:6.500px;border-top-width:4px;border-bottom-width:4px"></div>
<div class="abs mono" style="left:468.5px;top:902.5px;color:#c80000">font-stretch</div>
<div class="abs mono" style="left:590.5px;top:902.5px;color:#222">normal</div>

</div>

<!-- ================= TASKBAR ================= -->
<div class="abs" id="taskbar" style="left:23px;top:984px;width:1257px;height:40px;overflow:hidden;background:linear-gradient(90deg,#2b74ab 0,#2f7bb3 50px,#3f93cc 95px,#52a9dc 150px,#48a2da 230px,#3a9ad5 300px,#3191d0 390px,#2a86cb 470px,#2579c4 620px,#2273c0 850px,#2169b8 960px,#2166b6 1003px,#1d5099 1022px,#1b4c92 1100px,#1a4a8e 1257px)">
  <div class="abs" style="left:0;top:0;width:1257px;height:1px;background:#17324f"></div>
  <div class="abs" style="left:0;top:1px;width:1257px;height:1px;background:rgba(255,255,255,.28)"></div>
  <!-- light streak -->
  <div class="abs" style="left:1015px;top:-14px;width:19px;height:70px;background:linear-gradient(90deg,rgba(95,160,225,0),rgba(120,182,238,.9) 55%,rgba(110,175,235,0));transform:rotate(-24deg);filter:blur(1.500px)"></div>
  <!-- running buttons -->
  <div class="abs" style="left:60px;top:0;width:54px;height:39px;border:1px solid rgba(20,45,70,.75);border-radius:3px;background:linear-gradient(155deg,rgba(200,230,248,.6) 0,rgba(150,203,236,.5) 40%,rgba(105,175,224,.42) 62%,rgba(120,186,230,.5) 100%);box-shadow:inset 0 0 0 1px rgba(255,255,255,.55)"></div>
  <div class="abs" style="left:114px;top:0;width:5px;height:39px;border:1px solid rgba(20,45,70,.7);border-left:none;border-radius:0 3px 3px 0;background:rgba(150,205,235,.45);box-shadow:inset -1px 0 0 rgba(255,255,255,.5)"></div>
  <div class="abs" style="left:184px;top:0;width:59px;height:39px;border:1px solid rgba(20,45,70,.75);border-radius:3px;background:linear-gradient(150deg,rgba(235,246,252,.95) 0,rgba(205,230,245,.9) 35%,rgba(150,205,236,.85) 60%,rgba(125,192,230,.9) 100%);box-shadow:inset 0 0 0 1px rgba(255,255,255,.8)"></div>
  <div class="abs" style="left:432px;top:0;width:59px;height:39px;border:1px solid rgba(20,45,70,.75);border-radius:3px;background:linear-gradient(150deg,rgba(150,200,238,.75) 0,rgba(100,170,225,.55) 40%,rgba(60,140,208,.35) 100%);box-shadow:inset 0 0 0 1px rgba(255,255,255,.5)"></div>

  <!-- start orb -->
  <svg style="left:8px;top:1px" width="38" height="38" viewBox="0 0 38 38">
    <defs>
      <radialGradient id="orb" cx=".5" cy=".95" r=".95"><stop offset="0" stop-color="#46d6ff"/><stop offset=".3" stop-color="#1b9fe0"/><stop offset=".62" stop-color="#1f679c"/><stop offset="1" stop-color="#3f77a3"/></radialGradient>
      <linearGradient id="orbg" x1="0" y1="0" x2="0" y2="1"><stop offset="0" stop-color="rgba(255,255,255,.55)"/><stop offset="1" stop-color="rgba(255,255,255,.05)"/></linearGradient>
    </defs>
    <circle cx="19" cy="19" r="18.200" fill="url(#orb)" stroke="#1d4d78" stroke-width="1"/>
    <circle cx="19" cy="19" r="17.200" fill="none" stroke="rgba(200,230,250,.6)" stroke-width=".8"/>
    <path d="M2.500 17A16.500 16.500 0 0 1 35.500 17C28 21 10 21 2.500 17z" fill="url(#orbg)"/>
    <g transform="translate(17.200 18.400) scale(1.170) translate(-17.200 -18.400)"><path d="M11.200 9.600C13.600 8.200 16 8.200 18.400 9.600L16.500 17.300C14.200 16 11.800 16 9.300 17.300z" fill="#e9551f"/>
    <path d="M19.900 10.300C22.200 11.600 24.800 11.500 27.500 10.100L25.500 17.900C23 19.300 20.400 19.300 18 18z" fill="#80b63e"/>
    <path d="M8.900 18.800C11.300 17.500 13.800 17.500 16.100 18.800L14.100 26.500C11.700 25.200 9.300 25.200 6.900 26.500z" fill="#2f8fd9"/>
    <path d="M17.600 19.600C20 20.900 22.500 20.900 25.100 19.500L23.100 27.300C20.600 28.700 18.100 28.700 15.600 27.300z" fill="#fbbf2b"/></g>
  </svg>

  <!-- explorer -->
  <svg style="left:70px;top:6px" width="33" height="30" viewBox="0 0 33 30">
    <path d="M1.500 3.500Q1.500 1.500 3.500 1.500H14Q15.500 1.500 16 3L17 5.500H1.500z" fill="#f3dc8a" stroke="#c9a545" stroke-width=".8"/>
    <path d="M9 6Q9 4 11 4H23Q24.500 4 25 5.500L26 8H9z" fill="#f3dc8a" stroke="#c9a545" stroke-width=".8"/>
    <path d="M17 8.500Q17 6.500 19 6.500H29Q30.500 6.500 30.800 8V11H17z" fill="#f3dc8a" stroke="#c9a545" stroke-width=".8"/>
    <rect x="4" y="2.600" width="3.200" height="1.800" fill="#13b31c"/><rect x="7.500" y="2.600" width="6" height="1.600" fill="#fff"/>
    <rect x="12.500" y="5" width="3" height="1.800" fill="#d9261c"/><rect x="16" y="5" width="6" height="1.600" fill="#fff"/>
    <rect x="20.500" y="7.500" width="3" height="1.800" fill="#1b86e0"/><rect x="24" y="7.500" width="5" height="1.600" fill="#fff"/>
    <path d="M1 6.500H16L18 9.500H31.500Q32.200 9.500 32.200 10.500V27.500Q32.200 28.500 31.200 28.500H2Q1 28.500 1 27.500z" fill="#f6e59c" stroke="#cda84a" stroke-width=".9"/>
    <path d="M2 11H31V27.500H2z" fill="#f8e9a6"/>
    <path d="M5 29.500V20Q5 17.500 7.500 17.500H26Q28.500 17.500 28.500 20V29.500H23V23.500H10.500V29.500z" fill="#8fd0f2" stroke="#e9f7ff" stroke-width=".9" fill-opacity=".92"/>
    <path d="M7 19.500H26.500V22H7z" fill="#c6ebfb" fill-opacity=".8"/>
    <path d="M8.500 11V23M4.500 19.500H15" stroke="#fff" stroke-width=".8" stroke-opacity=".9"/>
  </svg>

  <!-- monitor (resource monitor) -->
  <svg style="left:135px;top:5px" width="32" height="30" viewBox="0 0 32 30">
    <path d="M1.500 8L7 5.500V20.500L2 22.500z" fill="#d7d7d2" stroke="#8d8d88" stroke-width=".7"/>
    <rect x="2.600" y="8.800" width="1.600" height="2.600" fill="#6fe23a"/>
    <ellipse cx="20" cy="26.500" rx="7.800" ry="2.800" fill="#e6e6e6" stroke="#9a9a9a" stroke-width=".7"/>
    <path d="M17.500 21.500H22.500L23 26H17z" fill="#cfcfcf"/>
    <path d="M7.500 1.500L30.500 5.500L27.500 23.500L8 19z" fill="#e9e9e4" stroke="#8d8d88" stroke-width=".8"/>
    <path d="M9.200 3.600L28.600 7L26 21.300L9.600 17.500z" fill="#3c3c3c"/>
    <path d="M18 5L28.600 7L26 21.300L17.500 19.300z" fill="#6a6a6a"/>
    <path d="M9.500 14L12 13L13.500 8L15.500 13.500L17 10.500L18.500 15.500L20.500 8.500L22 17L23.500 12L25 18.500L26.200 16" fill="none" stroke="#25e63a" stroke-width="1.500"/>
    <path d="M9.300 6.500L28.200 9.800M9.400 10L27.500 13.500" stroke="#1fae2c" stroke-width=".6"/>
  </svg>

  <!-- opera -->
  <svg style="left:198px;top:5px" width="30" height="30" viewBox="0 0 30 30">
    <defs><linearGradient id="opg" x1=".2" y1="0" x2=".8" y2="1"><stop offset="0" stop-color="#ff1b2d"/><stop offset=".6" stop-color="#e10d25"/><stop offset="1" stop-color="#a70014"/></linearGradient>
    <linearGradient id="opg2" x1="0" y1="0" x2="0" y2="1"><stop offset="0" stop-color="#9c0000"/><stop offset="1" stop-color="#ff4b4b"/></linearGradient></defs>
    <circle cx="15" cy="15" r="15" fill="url(#opg2)"/>
    <path fill-rule="evenodd" d="M10.100 23.500C8.400 21.500 7.300 18.600 7.300 15.300V14.700C7.300 11.400 8.400 8.500 10.100 6.500C12.200 3.800 15.400 2 19 2C21.200 2 23.300 2.700 25 3.800A15 15 0 1 0 25 26.200C23.300 27.300 21.200 28 19 28C15.400 28 12.200 26.200 10.100 23.500z" fill="url(#opg)"/>
    <ellipse cx="15.300" cy="15" rx="6.800" ry="11.600" fill="#bfe0f1"/>
  </svg>

  <!-- blender -->
  <svg style="left:259px;top:6px" width="32" height="26" viewBox="0 0 32 26">
    <path d="M14.500 1.200Q15.500 .2 16.700 1.100L28.500 10.200Q32 13.300 31.300 17.500Q30.300 23.500 23.500 25.200Q16.500 26.500 12 22Q9.500 19.300 9.800 16L3.200 21.200Q1.800 22 .8 20.800Q.1 19.600 1.200 18.600L9.700 12.200H5.200Q3.800 12.100 3.800 10.600Q3.900 9.300 5.300 9.200H17L13.800 6.500Q12.800 5.500 13.600 4.400z" fill="#f5821f"/>
    <circle cx="20.300" cy="14.700" r="6.400" fill="#fff"/>
    <circle cx="20.300" cy="14.700" r="3.900" fill="#0d4ea0"/>
  </svg>

  <!-- unity -->
  <svg style="left:322px;top:4px" width="30" height="30" viewBox="0 0 30 30">
    <path d="M23.500 1L28.500 19.500L24 29L9.500 23.500L.8 14.500L9.500 7.500z" fill="#111"/>
    <path d="M12 9.500L22 4.500L17 13.300H7.600z" fill="#fff"/>
    <path d="M7.600 15.800H17L22.200 24.800L12 20.700z" fill="#fff"/>
    <path d="M24.200 6L26.600 17.800L24.300 22.800L19.200 14.500z" fill="#fff"/>
  </svg>

  <!-- scroll / quill -->
  <svg style="left:385px;top:4px" width="29" height="31" viewBox="0 0 29 31">
    <path d="M4 5Q1 5 1.500 8.500Q2 11.500 5.500 11.500V25H23V9.500Q24 4 19 4.500z" fill="#d2cba3" stroke="#6d6832" stroke-width="1.200"/>
    <path d="M2 7Q2 4.500 5 4.500Q8 4.500 8 7.500Q8 10.500 5 11Q2.500 11 2 7z" fill="#a9a36f" stroke="#6d6832" stroke-width=".9"/>
    <path d="M10 8H12V11H14V8H16V15H10z" fill="#b8b28a"/>
    <path d="M12 13L15 17L19 14L18 18.500L22 20L18 21.500L18.500 26L15.500 23L12.500 26L12.800 21.500L9 20.500L12.500 18z" fill="#b6532a"/>
    <path d="M15.500 19.500Q18 8 26.500 .8Q29 3 26.500 7Q22 14 17 20.500z" fill="#3d62c4" stroke="#26418c" stroke-width=".7"/>
    <path d="M4.500 24.500H24Q26.500 24.500 26.500 27Q26.500 29.500 24 29.500H6.500Q4 29.500 4 27z" fill="#e7b99b" stroke="#6d6832" stroke-width="1.200"/>
    <path d="M4.800 25.500Q7.500 27 4.800 29" fill="none" stroke="#f7f0d4" stroke-width="1.200"/>
  </svg>

  <!-- paint -->
  <svg style="left:444px;top:5px" width="32" height="32" viewBox="0 0 32 32">
    <path d="M1.500 21Q1 13 8 8.500Q15 4.500 22.500 6.500Q28.500 9 28.500 16Q28.500 22 24 25.500Q20 28.500 14.500 27.500Q10.500 26.500 11.500 23.500Q12 21.500 9.500 21.500Q7 22 4 23Q1.700 23.300 1.500 21z" fill="#d6e9f6" stroke="#9cc4e4" stroke-width=".7"/>
    <circle cx="14" cy="18.500" r="2.700" fill="#4e9bd6"/>
    <ellipse cx="6" cy="16.300" rx="2.700" ry="2.400" fill="#e6382c"/>
    <ellipse cx="10.800" cy="11.500" rx="2.700" ry="2.300" fill="#4cb735"/>
    <ellipse cx="17.200" cy="9" rx="3" ry="2.300" fill="#f8b61c"/>
    <path d="M15.300 30.500Q17 19 23 9.500L25.600 10.800Q22 21 15.300 30.500z" fill="#ef8a1d" stroke="#c96a0d" stroke-width=".5"/>
    <path d="M23 9.500L24.300 6.500L26.800 7.700L25.600 10.800z" fill="#b9bec4"/>
    <path d="M24.300 6.500Q23 2 26 .8Q30.500 1.200 31.200 4Q29.500 7 26.800 7.700z" fill="#d8a86a"/>
  </svg>

  <!-- tray -->
  <div class="ui" id="en" style="left:1088px;top:12px;letter-spacing:-1.4px;color:#fff;font-size:12px">EN</div>
  <svg style="left:1118px;top:13px" width="17" height="16" viewBox="0 0 17 16">
    <path d="M1.800 .8V15.500" stroke="#fff" stroke-width="1.500"/>
    <path d="M2.600 1.500Q5 0 7.500 1.500T12.500 1.500V9Q10 10.500 7.500 9T2.600 9z" fill="#fff"/>
    <circle cx="11" cy="10.800" r="4.600" fill="#e0242b" stroke="#fbe9e9" stroke-width=".7"/>
    <path d="M9.200 9L12.800 12.600M12.800 9L9.200 12.600" stroke="#fff" stroke-width="1.500"/>
  </svg>
  <svg style="left:1142px;top:15px" width="16" height="12" viewBox="0 0 16 12">
    <rect x="0" y="9.500" width="2.200" height="2.500" fill="#fff"/><rect x="3.200" y="7.500" width="2.200" height="4.500" fill="#fff"/>
    <rect x="6.400" y="5" width="2.300" height="7" fill="#5d7ea8" stroke="#8fa8c8" stroke-width=".4"/><rect x="9.700" y="2.500" width="2.300" height="9.500" fill="#4f709c" stroke="#8fa8c8" stroke-width=".4"/><rect x="13" y="0" width="2.300" height="12" fill="#456592" stroke="#8fa8c8" stroke-width=".4"/>
  </svg>
  <svg style="left:1166px;top:13px" width="17" height="15" viewBox="0 0 17 15">
    <path d="M.8 5H3.500L7.500 .8V14.200L3.500 10H.8z" fill="#fff"/>
    <path d="M9.500 5Q11 7.500 9.500 10" fill="none" stroke="#fff" stroke-width="1.100"/>
    <path d="M11.500 3.200Q14 7.500 11.500 11.800" fill="none" stroke="#e6edf6" stroke-width="1.100"/>
    <path d="M13.600 1.500Q17 7.500 13.600 13.500" fill="none" stroke="#c2d0e2" stroke-width="1"/>
  </svg>
  <div class="ui" id="clk" style="left:1213px;top:6px;color:#fff;font-size:12px;letter-spacing:-.45px">14:07</div>
  <div class="ui" id="date" style="left:1199px;top:23px;letter-spacing:-.42px;color:#fff;font-size:12px">07.05.2017</div>
</div>


<!-- ================= LEFT STRIP ================= -->
<div class="abs" id="strip" style="left:0;top:0;width:23px;height:984px;overflow:hidden;background:#fff">
  <div class="abs" style="left:0;top:0;width:23px;height:30px;background:linear-gradient(90deg,#7b9cc6 0,#8eadd4 23px)"></div>
  <div class="abs" style="left:0;top:21px;width:23px;height:9px;background:linear-gradient(90deg,#6288b8 0,#7d9fc9 12px,#86a8d2 23px)"></div>
  <div class="abs" style="left:1px;top:0;width:72px;height:21px;border-top-color:#8aa6c8;border:1px solid #4a4f57;border-radius:0 0 5px 5px;background:linear-gradient(180deg,#eef1f5 0,#dfe3e9 55%,#d2d7de 100%);box-shadow:0 1px 0 rgba(255,255,255,.55),inset 0 0 0 1px rgba(255,255,255,.6)"></div>
  <svg style="left:10px;top:4px" width="14" height="14" viewBox="0 0 14 14"><path fill-rule="evenodd" fill="url(#og)" d="M7 0a7 7 0 1 0 0 14A7 7 0 0 0 7 0zM7.400 1.900c1.800 0 3 2.200 3 5.100s-1.200 5.100-3 5.100-3-2.200-3-5.100 1.200-5.100 3-5.100z"/></svg>
  <div class="abs" style="left:0;top:29px;width:23px;height:1px;background:#8e9299"></div>
  <div class="abs" style="left:0;top:30px;width:23px;height:37px;background:#f4f4f4"></div>
  <svg style="left:14px;top:43px" width="14" height="11" viewBox="0 0 14 11"><path d="M6.800 0L0 5.500 6.800 11V7H14V4H6.800z" fill="#bdbdbd"/></svg>
  <div class="abs" style="left:0;top:68px;width:23px;height:1px;background:#7a7a7a"></div>
  <div class="abs" style="left:0;top:69px;width:23px;height:845px;background:#000"></div>
  <div class="pg" style="left:15px;top:925px">Team color</div>
  <div class="pg" style="left:15px;top:955px">Camera distance</div>
</div>


</body>
</html>
